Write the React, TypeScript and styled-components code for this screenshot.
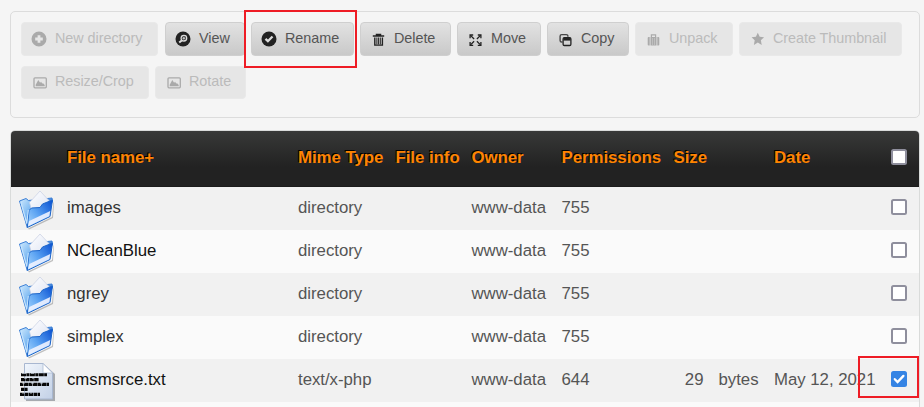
import React from "react";
import styled, { createGlobalStyle, css } from "styled-components";

const GlobalStyle = createGlobalStyle`
  * { box-sizing: border-box; }
  html, body { margin: 0; height: 100%; overflow: hidden; background: #f5f5f5; }
  body { font-family: "Liberation Sans", Arial, sans-serif; color: #555; }
`;

const Page = styled.main`
  height: 407px;
  overflow: hidden;
  padding: 11px 4px 0 10px;
`;

const Toolbar = styled.div`
  height: 107px;
  border: 1px solid #dcdcdc;
  border-radius: 5px;
  padding: 10px 0 0 10px;
  display: flex;
  flex-direction: column;
  gap: 10px;
`;

const ButtonRow = styled.div`
  display: flex;
  gap: 6px;
`;

const ToolButton = styled.button<{ $width: number; $off?: boolean; $short?: boolean; $gap?: number }>`
  position: relative;
  display: flex;
  align-items: center;
  flex: none;
  width: ${(p) => p.$width}px;
  height: ${(p) => (p.$short ? 33 : 34)}px;
  margin: 0 ${(p) => p.$gap ?? 0}px 0 0;
  padding: 0 0 ${(p) => (p.$short ? 3 : 2)}px 10px;
  gap: 8px;
  border: 1px solid #cfcfcf;
  border-radius: 4px;
  background: linear-gradient(#e2e2e2, #c9c9c9);
  color: #555;
  font: 14.4px/20px "Liberation Sans", Arial, sans-serif;
  white-space: nowrap;
  ${(p) =>
    p.$off &&
    css`
      border-color: #e9e9e9;
      background: #e6e6e6;
      color: #bbb;
    `}
`;

const Glyph = styled.svg<{ $off?: boolean }>`
  width: 16px;
  height: 16px;
  flex: none;
  position: relative;
  top: 1px;
  left: -1px;
  margin-right: -1px;
  color: ${(p) => (p.$off ? "#aaa" : "#222")};
`;

const Label = styled.span`
  letter-spacing: -0.05px;
`;

const Highlight = styled.span<{ $inset: string }>`
  position: absolute;
  inset: ${(p) => p.$inset};
  border: 2px solid #ee1c25;
  pointer-events: none;
  z-index: 2;
`;

const Table = styled.div`
  margin-top: 12px;
  border: 1px solid #d9dbda;
  border-radius: 5px 5px 0 0;
  height: 300px;
  overflow: hidden;
`;

const Row = styled.div<{ $odd?: boolean }>`
  position: relative;
  display: grid;
  grid-template-columns: 56px 231px 97.5px 76px 90px 112px 33px 12px 55.5px 101px 44px;
  align-items: center;
  height: 43px;
  padding-bottom: 2px;
  font-size: 16.8px;
  line-height: 22px;
  letter-spacing: -0.02px;
  white-space: nowrap;
  background: ${(p) => (p.$odd ? "#f1f1f1" : "#fafafa")};
`;

const FileName = styled.span<{ $dark?: boolean }>`
  color: ${(p) => (p.$dark ? "#111" : "#333")};
`;

const SizeValue = styled.span`
  text-align: right;
  padding-right: 3px;
`;

const FileIcon = styled.svg`
  width: 38px;
  height: 40px;
  margin-left: 7px;
  position: relative;
  top: 2px;
`;

const CheckCell = styled.span`
  display: flex;
  padding-left: 16px;
`;

const Check = styled.span<{ $on?: boolean }>`
  display: grid;
  place-items: center;
  width: 16px;
  height: 16px;
  margin-bottom: 1px;
  border: ${(p) => (p.$on ? "0" : "2px solid #8f8f9d")};
  border-radius: 2.5px;
  background: ${(p) => (p.$on ? "#3584e4" : "#fff")};
`;

const HeaderRow = styled(Row)`
  height: 56px;
  padding-bottom: 1px;
  font-weight: bold;
  color: #ff8400;
  text-shadow: -1px -1px 0 #000;
  background: linear-gradient(#383938, #222 65%, #222);
  border-bottom: 1px solid #1c1c1c;

  ${CheckCell} {
    padding-bottom: 2px;
  }
`;

type IconName = "plus" | "zoom" | "check" | "trash" | "move" | "copy" | "bag" | "star" | "image";

const shapes: Record<IconName, React.ReactNode> = {
  plus: (
    <path fillRule="evenodd" fill="currentColor" d="M8 .5a7.5 7.5 0 1 0 0 15A7.5 7.5 0 0 0 8 .5ZM6.6 4.2h2.8v2.4h2.4v2.8H9.4v2.4H6.6V9.4H4.2V6.6h2.4Z" />
  ),
  zoom: (
    <>
      <circle cx="8" cy="8" r="7.5" fill="currentColor" />
      <path d="m6.8 9.4-2.6 2.2" stroke="#ddd" strokeWidth="2" />
      <circle cx="8.9" cy="7.2" r="2.8" fill="none" stroke="#ddd" strokeWidth="1.3" />
      <path d="M8.9 5.7v3M7.4 7.2h3" stroke="#ddd" strokeWidth="1" />
    </>
  ),
  check: (
    <>
      <circle cx="8" cy="8" r="7.5" fill="currentColor" />
      <path d="m4.5 7.9 2.4 2.3 4.6-4.7" fill="none" stroke="#ddd" strokeWidth="2.3" />
    </>
  ),
  trash: (
    <g fill="none" stroke="currentColor">
      <path d="M2.8 5h11.4M6.5 4.5V3.4h4v1.1" strokeWidth="1.5" />
      <path d="M4.8 6.5v7.6h7.6V6.5" strokeWidth="1.4" />
      <path d="M6.9 6.5v7M8.6 6.5v7M10.3 6.5v7" strokeWidth="1" />
    </g>
  ),
  move: (
    <g fill="none" stroke="currentColor">
      <path d="M3.1 7.2V4h3.1M10.8 4h3.1v3.2M3.1 11.1v3.2h3.1M10.8 14.3h3.1v-3.2" strokeWidth="1.3" />
      <path d="m3.5 4.4 3.6 3.6M13.5 4.4l-3.6 3.6M3.5 13.9l3.6-3.6M13.5 13.9l-3.6-3.6" strokeWidth="1.3" />
    </g>
  ),
  copy: (
    <g fill="none" stroke="currentColor">
      <path d="M5.5 11H4.7A1.6 1.6 0 0 1 3.1 9.4V5.2a1.6 1.6 0 0 1 1.6-1.6h4.6a1.6 1.6 0 0 1 1.6 1.6v.5" strokeWidth="1.4" opacity=".8" />
      <rect x="6.1" y="6.7" width="7.8" height="7.8" rx="1.3" strokeWidth="1.3" />
      <path d="M6.4 8.2h7.2" strokeWidth="2.8" />
    </g>
  ),
  bag: (
    <g fill="currentColor">
      <path d="M2.7 7q0-1 1-1h1v8.6h-1q-1 0-1-1ZM5.5 6h6v8.6h-6ZM12.3 6h1q1 0 1 1v6.6q0 1-1 1h-1Z" />
      <path d="M6.4 6V3.8h4.2V6" fill="none" stroke="currentColor" strokeWidth="1.2" />
      <path d="M7.5 7v7M9.5 7v7" stroke="#ccc" strokeWidth=".6" />
    </g>
  ),
  star: <path fill="currentColor" transform="translate(.8 0)" d="m8 1.7 1.9 4 4.3.6-3.1 3 .8 4.6L8 11.6 4.1 13.9l.8-4.6-3.1-3 4.3-.6Z" />,
  image: (
    <>
      <rect x="3" y="3.8" width="12.3" height="10" rx="1" fill="none" stroke="currentColor" strokeWidth="1.3" />
      <path fill="currentColor" d="M4.7 12.3v-1.5l2.6-4.7 1.8 2.6 1-1 1.1 1.8.9-.3 1.6 1.8v1.3Z" />
    </>
  ),
};

type Tool = { label: string; icon: IconName; width: number; off?: boolean; marked?: boolean; gap?: number };

const topTools: Tool[] = [
  { label: "New directory", icon: "plus", width: 137, off: true, gap: 1 },
  { label: "View", icon: "zoom", width: 80 },
  { label: "Rename", icon: "check", width: 103, marked: true },
  { label: "Delete", icon: "trash", width: 91 },
  { label: "Move", icon: "move", width: 84 },
  { label: "Copy", icon: "copy", width: 82 },
  { label: "Unpack", icon: "bag", width: 98, off: true },
  { label: "Create Thumbnail", icon: "star", width: 163, off: true },
];

const bottomTools: Tool[] = [
  { label: "Resize/Crop", icon: "image", width: 128, off: true },
  { label: "Rotate", icon: "image", width: 91, off: true },
];

function ToolItem({ tool, short }: { tool: Tool; short?: boolean }) {
  return (
    <ToolButton $width={tool.width} $off={tool.off} $short={short} $gap={tool.gap}>
      <Glyph $off={tool.off} viewBox="0 0 16 16">{shapes[tool.icon]}</Glyph>
      <Label>{tool.label}</Label>
      {tool.marked && <Highlight $inset="-13px -4px -13px -8px" />}
    </ToolButton>
  );
}

function Folder() {
  return (
    <FileIcon viewBox="0 0 38 40">
      <defs>
        <linearGradient id="folderBack" x1="0" y1="0" x2="1" y2=".6">
          <stop offset="0" stopColor="#d3ecfe" />
          <stop offset=".4" stopColor="#7db9f2" />
          <stop offset="1" stopColor="#1f62cc" />
        </linearGradient>
        <linearGradient id="folderFront" x1="0" y1=".9" x2="1" y2=".1">
          <stop offset="0" stopColor="#a4d4fd" />
          <stop offset=".45" stopColor="#5aa2f2" />
          <stop offset="1" stopColor="#0f55d4" />
        </linearGradient>
        <linearGradient id="sheet" x1="0" y1="0" x2="1" y2="1">
          <stop offset="0" stopColor="#fff" />
          <stop offset="1" stopColor="#dde3f3" />
        </linearGradient>
      </defs>
      <path d="m10 38.5 24-11.5 1.5-15 .5 1-1 15L11 39.5Z" fill="#777" opacity=".45" />
      <path d="m1.5 11 6.5-2.5 2.5 2 23.5-2.5.5 4-9 8-16.3 17.3Z" fill="url(#folderBack)" stroke="#3b7fd6" />
      <path d="M11.5 12.5 22 1 31 10.5 28 17l-14 5Z" fill="url(#sheet)" stroke="#c7cee2" strokeWidth=".7" />
      <path d="m11 20.5 2.5-2.5 8.5-.5 2.5-3.5 10-4-2.5 16.5L9.3 37.5Z" fill="url(#folderFront)" stroke="#1e66c9" />
      <path d="m11.2 31 21-10-.8 5.3L10 36.3Z" fill="#f0f3ff" opacity=".9" />
      <path d="m2.8 12 6 21.5L10.3 20" fill="none" stroke="#c6e5ff" strokeWidth="1.1" />
    </FileIcon>
  );
}

function TextFile() {
  return (
    <FileIcon viewBox="0 0 38 40">
      <defs>
        <linearGradient id="paper" x1="0" y1="0" x2="1" y2="1">
          <stop offset="0" stopColor="#f1f6fc" />
          <stop offset="1" stopColor="#c2d0e6" />
        </linearGradient>
      </defs>
      <path d="M8 4h20l9 8v27H8Z" fill="#8e9198" opacity=".75" />
      <path d="M6.5 1.5h18.5l9.5 9V37h-28Z" fill="url(#paper)" stroke="#a8b7d0" />
      <path d="M25 1.5 34.5 11H25Z" fill="#fff" stroke="#acbbd2" strokeWidth=".8" />
      <g stroke="#080808" strokeWidth="3.1">
        <path d="M3 12.8h26" strokeDasharray="5 .4 3 .5" />
        <path d="M3 17.6h18" strokeDasharray="4 .4" />
        <path d="M2 22.4h29" strokeDasharray="3 .6 5 .4" />
        <path d="M3 27.4h7" strokeDasharray="3 .4" />
        <path d="M2 32.4h20" strokeDasharray="4 .5" />
      </g>
      <path d="M4 11.4h4m5 0h3M6 16.2h3m5 0h2M4 21h3m6 0h3m6 0h3M4 31h3m5 0h2" stroke="#dbe5f2" strokeWidth=".7" />
    </FileIcon>
  );
}

function CheckMark() {
  return (
    <svg width="16" height="16" viewBox="0 0 16 16" fill="none">
      <path d="m3.8 8.2 2.8 2.9 5.8-6.2" stroke="#fff" strokeWidth="2.3" strokeLinecap="round" />
    </svg>
  );
}

const files = [
  { name: "images", mime: "directory", mode: "755" },
  { name: "NCleanBlue", mime: "directory", mode: "755" },
  { name: "ngrey", mime: "directory", mode: "755" },
  { name: "simplex", mime: "directory", mode: "755" },
  { name: "cmsmsrce.txt", mime: "text/x-php", mode: "644", size: "29", unit: "bytes", date: "May 12, 2021", checked: true },
];

export default function App() {
  return (
    <Page>
      <GlobalStyle />
      <Toolbar>
        <ButtonRow>{topTools.map((t) => <ToolItem key={t.label} tool={t} />)}</ButtonRow>
        <ButtonRow>{bottomTools.map((t) => <ToolItem key={t.label} tool={t} short />)}</ButtonRow>
      </Toolbar>
      <Table>
        <HeaderRow>
          <span />
          <span>File name+</span>
          <span>Mime Type</span>
          <span>File info</span>
          <span>Owner</span>
          <span>Permissions</span>
          <span>Size</span>
          <span />
          <span />
          <span>Date</span>
          <CheckCell><Check /></CheckCell>
        </HeaderRow>
        {files.map((f, i) => (
          <Row key={f.name} $odd={i % 2 === 0}>
            {f.checked ? <TextFile /> : <Folder />}
            <FileName $dark={f.checked || i === 1}>{f.name}</FileName>
            <span>{f.mime}</span>
            <span />
            <span>www-data</span>
            <span>{f.mode}</span>
            <SizeValue>{f.size}</SizeValue>
            <span />
            <span>{f.unit}</span>
            <span>{f.date}</span>
            <CheckCell><Check $on={f.checked}>{f.checked && <CheckMark />}</Check></CheckCell>
            {f.checked && <Highlight $inset="-3px 0 4px 847px" />}
          </Row>
        ))}
        <Row />
      </Table>
    </Page>
  );
}
